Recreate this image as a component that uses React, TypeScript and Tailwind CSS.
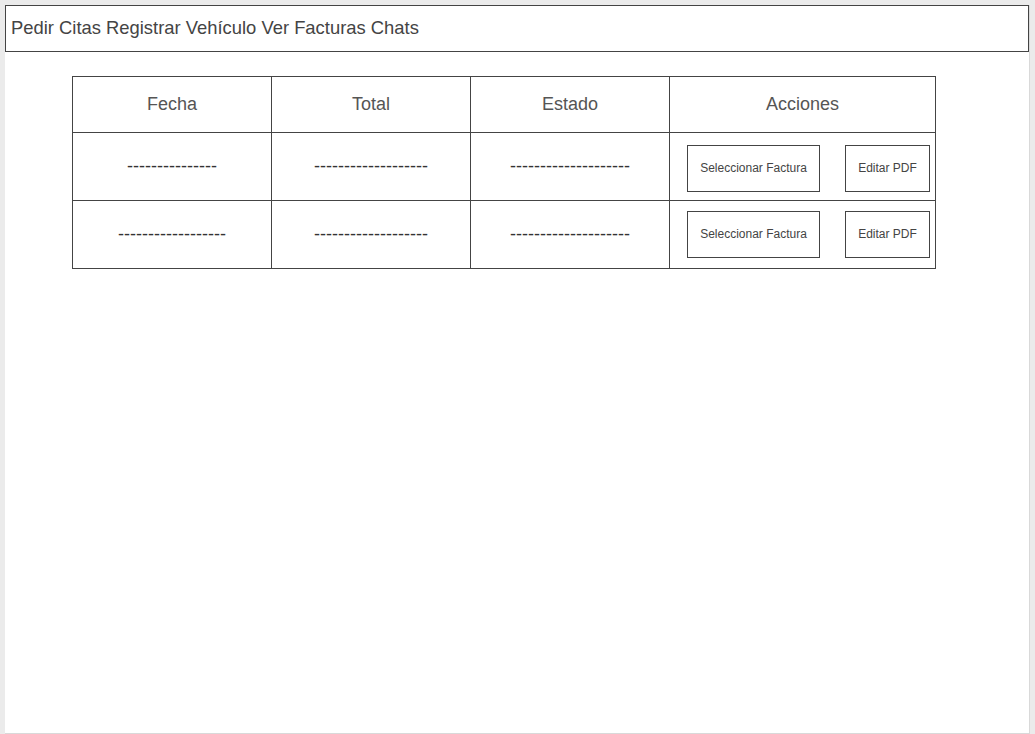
const rows = [
  { fecha: '---------------', total: '-------------------', estado: '--------------------' },
  { fecha: '------------------', total: '-------------------', estado: '--------------------' },
]

const headers = ['Fecha', 'Total', 'Estado', 'Acciones']

export default function App() {
  return (
    <div className="min-h-screen bg-[#ebebeb] pl-[5px] pt-[5px] font-['Liberation_Sans',Arial,sans-serif]">
      <div className="w-[1025px] h-[729px] bg-white border-r border-b border-[#d9d9d9]">
        <nav className="w-[1024px] h-[47px] border border-[#444] flex items-center px-[5px] pb-[2px] text-[18.4px] text-[#444]">
          Pedir Citas Registrar Vehículo Ver Facturas Chats
        </nav>

        <div className="ml-[67px] mt-[24px] w-[864px] grid grid-cols-[199px_199px_199px_266px] border-r border-b border-[#444]">
          {headers.map((h) => (
            <div
              key={h}
              className="h-[56px] border-l border-t border-[#444] flex items-center justify-center text-[18px] text-[#555]"
            >
              {h}
            </div>
          ))}

          {rows.map((r, i) => (
            <div key={i} className="contents">
              <div className="h-[68px] border-l border-t border-[#444] flex items-center justify-center text-[18px] text-[#333]">
                {r.fecha}
              </div>
              <div className="h-[68px] border-l border-t border-[#444] flex items-center justify-center text-[18px] text-[#333]">
                {r.total}
              </div>
              <div className="h-[68px] border-l border-t border-[#444] flex items-center justify-center text-[18px] text-[#333]">
                {r.estado}
              </div>
              <div
                className={
                  i === 0
                    ? 'h-[68px] border-l border-t border-[#444] flex items-center pl-[17px] pt-[4px] gap-[25px]'
                    : 'h-[68px] border-l border-t border-[#444] flex items-center pl-[17px] gap-[25px]'
                }
              >
                <button className="w-[133px] h-[47px] pb-[2px] border border-[#444] bg-white text-[12px] text-[#444]">
                  Seleccionar Factura
                </button>
                <button className="w-[85px] h-[47px] pb-[2px] border border-[#444] bg-white text-[12px] text-[#444]">
                  Editar PDF
                </button>
              </div>
            </div>
          ))}
        </div>
      </div>
    </div>
  )
}
